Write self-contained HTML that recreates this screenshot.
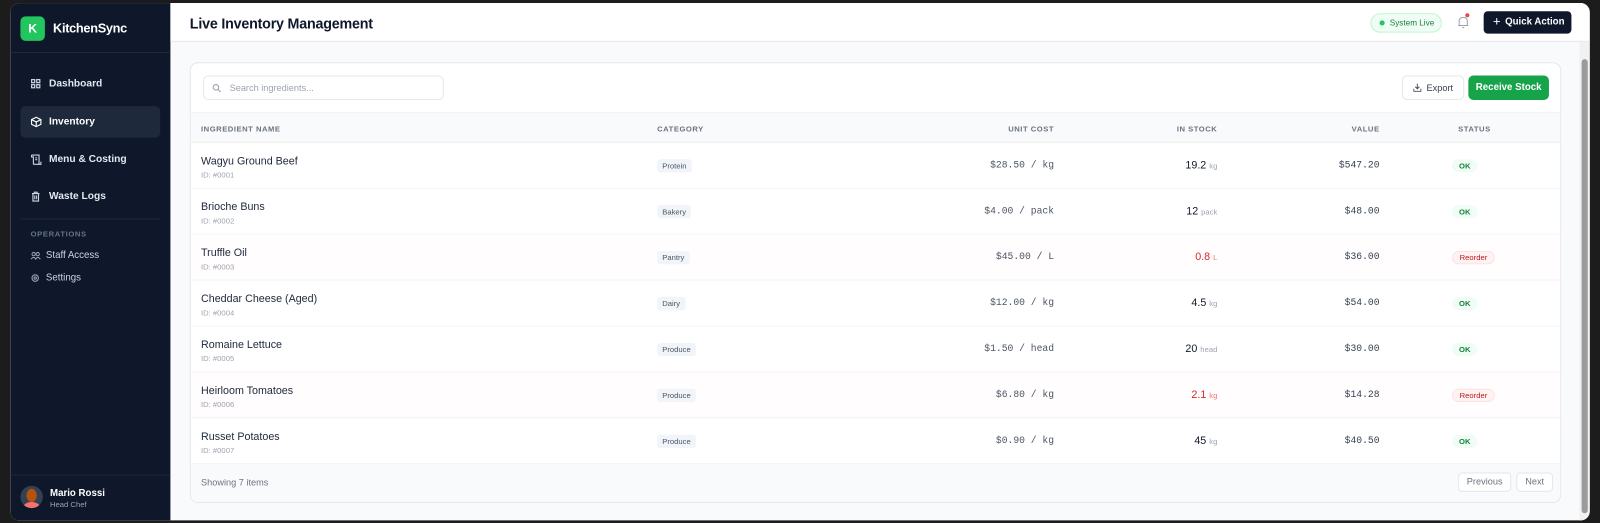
<!DOCTYPE html>
<html><head><meta charset="utf-8"><style>
*{box-sizing:border-box;margin:0;padding:0}
body{width:1600px;height:523px;background:#1c1c1c;font-family:"Liberation Sans",sans-serif;position:relative;overflow:hidden}
.wrap{position:absolute;left:0;top:0;width:1568px;height:513px;transform:scale(1.0204);transform-origin:0 0}
.win{position:absolute;left:10px;top:3px;width:1548px;height:507px;border-radius:9px;overflow:hidden;background:#f8fafc}
.side{position:absolute;left:0;top:0;width:157px;height:507px;background:#0f172a;color:#cbd5e1}
.logo{position:absolute;left:10px;top:13px;width:24px;height:24px;background:#22c55e;border-radius:5px;color:#fff;font-weight:bold;font-size:12px;text-align:center;line-height:24px}
.brand{position:absolute;left:42px;top:18px;color:#fff;font-weight:bold;font-size:12.5px;letter-spacing:-.3px}
.hr{position:absolute;left:0;width:157px;height:1px;background:#1e293b}
.nav{position:absolute;left:10px;width:137px;height:31px;border-radius:5px;font-size:10px;font-weight:bold;color:#e2e8f0;line-height:31px;padding-left:28px}
.nav svg{position:absolute;left:10px;top:10px}
.nav.act{background:#1e293b;color:#fff}
.sm{position:absolute;left:20px;font-size:9.5px;color:#cbd5e1}
.sm svg{position:absolute;left:0;top:1px}
.main{position:absolute;left:157px;top:0;width:1391px;height:507px}
.top{position:absolute;left:0;top:0;width:1391px;height:38px;background:#fff;border-bottom:1px solid #e5e7eb}
.title{position:absolute;left:19px;top:12px;font-size:14px;font-weight:bold;color:#0f172a;letter-spacing:-.2px}
.live{position:absolute;left:1176px;top:10px;width:70px;height:19px;border:1px solid #bbf7d0;background:#f0fdf4;border-radius:10px;font-size:8px;color:#15803d;line-height:17px;padding-left:18px}
.live:before{content:"";position:absolute;left:8px;top:6px;width:5px;height:5px;border-radius:50%;background:#22c55e}
.qa{position:absolute;left:1287px;top:8px;width:86px;height:22px;background:#0f172a;border-radius:4px;color:#fff;font-size:9.5px;font-weight:bold;line-height:22px;padding-left:21px;white-space:nowrap}
.qa:before{content:"+";position:absolute;left:9px;top:-1px;font-size:13px;font-weight:normal}
.scroll{position:absolute;left:1381px;top:38px;width:10px;height:469px;background:#f1f1f1}
.thumb{position:absolute;left:2px;top:17px;width:6px;height:445px;background:#9b9b9b;border-radius:3px}
.card{position:absolute;left:19px;top:58px;width:1344px;height:432px;background:#fff;border:1px solid #e5e7eb;border-radius:8px;overflow:hidden}
.search{position:absolute;left:12px;top:12px;width:236px;height:24px;border:1px solid #e5e7eb;border-radius:5px;font-size:9px;color:#9ca3af;line-height:22px;padding-left:25px}
.exp{position:absolute;left:1187px;top:12px;width:61px;height:24px;border:1px solid #e5e7eb;border-radius:5px;font-size:9px;color:#374151;line-height:22px;padding-left:23px}
.rs{position:absolute;left:1252px;top:12px;width:79px;height:24px;background:#16a34a;border-radius:5px;font-size:9.5px;color:#fff;font-weight:bold;line-height:24px;text-align:center}
.th{position:absolute;left:0;top:48px;width:1344px;height:30px;background:#f8fafc;border-top:1px solid #eef0f3;border-bottom:1px solid #eef0f3}
.h{position:absolute;top:11px;font-size:7.5px;font-weight:bold;color:#6b7280;letter-spacing:.5px}
.row{position:absolute;left:0;width:1344px;height:45px;border-bottom:1px solid #f1f3f5}
.nm{position:absolute;left:10px;top:12px;font-size:10.5px;color:#1e293b}
.id{position:absolute;left:10px;top:27px;font-size:7.5px;color:#9ca3af}
.cat{position:absolute;left:457px;top:16px;height:13px;padding:0 5px;background:#f1f5f9;border-radius:3px;font-size:7.5px;color:#4b5563;line-height:13px}
.mono{position:absolute;font-family:"Liberation Mono",monospace;font-size:9.5px;color:#4b5563;top:16px;text-align:right}
.uc{right:498px}.val{right:179px;color:#374151}
.st{position:absolute;right:338px;top:16px;font-size:10.5px;color:#0f172a}
.st small{font-size:7.5px;color:#9ca3af}
.st.red{color:#dc2626}.st.red small{color:#f87171}
.ok,.re{position:absolute;top:16px;height:13px;border-radius:7px;font-size:7.5px;line-height:13px;text-align:center}
.ok{left:1236px;width:25px;background:#f0fdf4;color:#15803d;font-weight:bold}
.re{left:1236px;width:42px;background:#fef2f2;color:#b91c1c;border:1px solid #fee2e2;line-height:11px}
.foot{position:absolute;left:0;top:393px;width:1344px;height:39px;background:#f8fafc}
.pg{position:absolute;top:8px;height:19px;border:1px solid #e5e7eb;background:#fff;border-radius:4px;font-size:9px;color:#6b7280;line-height:17px;text-align:center}
</style></head><body>
<div class="wrap">
<div class="win">
<div class="side">
<div class="logo">K</div><div class="brand">KitchenSync</div>
<div class="hr" style="top:48px"></div>
<div class="nav" style="top:64px"><svg width="10" height="10" viewBox="0 0 10 10" fill="none" stroke="#cbd5e1" stroke-width="1.2"><rect x="1" y="1" width="3" height="3"/><rect x="6" y="1" width="3" height="3"/><rect x="1" y="6" width="3" height="3"/><rect x="6" y="6" width="3" height="3"/></svg>Dashboard</div>
<div class="nav act" style="top:101px"><svg width="11" height="11" viewBox="0 0 12 12" fill="none" stroke="#fff" stroke-width="1.2"><path d="M6 1L11 3.5V8.5L6 11L1 8.5V3.5Z M1 3.5L6 6L11 3.5 M6 6V11"/></svg>Inventory</div>
<div class="nav" style="top:138px"><svg width="11" height="11" viewBox="0 0 12 12" fill="none" stroke="#cbd5e1" stroke-width="1.2"><path d="M1 1H9V11H3M1 1V3H3V11M5 4H7M5 6H7M3 11H11V8"/></svg>Menu &amp; Costing</div>
<div class="nav" style="top:174px"><svg width="10" height="11" viewBox="0 0 10 12" fill="none" stroke="#cbd5e1" stroke-width="1.2"><path d="M1 3H9M3.5 3V1.5H6.5V3M2 3V11H8V3M4 5V9M6 5V9"/></svg>Waste Logs</div>
<div class="hr" style="top:211px;left:10px;width:137px"></div>
<div class="sm" style="top:222px;left:20px;font-size:7.5px;font-weight:bold;color:#64748b;letter-spacing:.6px">OPERATIONS</div>
<div class="sm" style="top:242px;padding-left:15px"><svg width="10" height="9" viewBox="0 0 10 9" fill="none" stroke="#94a3b8" stroke-width="1"><circle cx="3" cy="3" r="1.6"/><circle cx="7" cy="3" r="1.6"/><path d="M0.5 8Q3 4.5 5 8Q7 4.5 9.5 8"/></svg>Staff Access</div>
<div class="sm" style="top:264px;padding-left:15px"><svg width="9" height="9" viewBox="0 0 10 10" fill="none" stroke="#94a3b8" stroke-width="1.2"><circle cx="5" cy="5" r="3.5"/><circle cx="5" cy="5" r="1.3"/></svg>Settings</div>
<div class="hr" style="top:462px"></div>
<div style="position:absolute;left:10px;top:473px;width:22px;height:22px;border-radius:50%;background:#334155;overflow:hidden"><div style="position:absolute;left:6px;top:3px;width:10px;height:13px;border-radius:50%;background:#b45309"></div><div style="position:absolute;left:3px;top:16px;width:16px;height:10px;border-radius:50%;background:#f87171"></div></div>
<div style="position:absolute;left:39px;top:475px;font-size:9.5px;font-weight:bold;color:#fff">Mario Rossi</div>
<div style="position:absolute;left:39px;top:487px;font-size:7.5px;color:#94a3b8">Head Chef</div>
</div>
<div class="main">
<div class="top"><div class="title">Live Inventory Management</div><div class="live">System Live</div>
<svg style="position:absolute;left:1261px;top:12px" width="12" height="14" viewBox="0 0 12 14" fill="none" stroke="#9ca3af" stroke-width="1"><path d="M2 10V6Q2 2 6 2Q10 2 10 6V10H11H1M5 12H7"/></svg>
<div style="position:absolute;left:1269px;top:10px;width:4px;height:4px;border-radius:50%;background:#ef4444"></div>
<div class="qa">Quick Action</div></div>
<div class="card">
<div class="search"><svg style="position:absolute;left:8px;top:7px" width="9" height="9" viewBox="0 0 10 10" fill="none" stroke="#9ca3af" stroke-width="1.2"><circle cx="4" cy="4" r="3"/><path d="M6.3 6.3L9 9"/></svg>Search ingredients...</div>
<div class="exp"><svg style="position:absolute;left:10px;top:7px" width="8" height="8" viewBox="0 0 8 8" fill="none" stroke="#4b5563" stroke-width="1"><path d="M4 0V5M2 3L4 5L6 3M0.5 5V7.5H7.5V5"/></svg>Export</div>
<div class="rs">Receive Stock</div>
<div class="th"><span class="h" style="left:10px">INGREDIENT NAME</span><span class="h" style="left:457px">CATEGORY</span><span class="h" style="right:498px">UNIT COST</span><span class="h" style="right:338px">IN STOCK</span><span class="h" style="right:179px">VALUE</span><span class="h" style="left:1242px">STATUS</span></div>
<div class="row" style="top:78px"><div class="nm">Wagyu Ground Beef</div><div class="id">ID: #0001</div><div class="cat">Protein</div><div class="mono uc">$28.50 / kg</div><div class="st">19.2 <small>kg</small></div><div class="mono val">$547.20</div><div class="ok">OK</div></div>
<div class="row" style="top:123px"><div class="nm">Brioche Buns</div><div class="id">ID: #0002</div><div class="cat">Bakery</div><div class="mono uc">$4.00 / pack</div><div class="st">12 <small>pack</small></div><div class="mono val">$48.00</div><div class="ok">OK</div></div>
<div class="row" style="top:168px;background:#fffdfd"><div class="nm">Truffle Oil</div><div class="id">ID: #0003</div><div class="cat">Pantry</div><div class="mono uc">$45.00 / L</div><div class="st red">0.8 <small>L</small></div><div class="mono val">$36.00</div><div class="re">Reorder</div></div>
<div class="row" style="top:213px"><div class="nm">Cheddar Cheese (Aged)</div><div class="id">ID: #0004</div><div class="cat">Dairy</div><div class="mono uc">$12.00 / kg</div><div class="st">4.5 <small>kg</small></div><div class="mono val">$54.00</div><div class="ok">OK</div></div>
<div class="row" style="top:258px"><div class="nm">Romaine Lettuce</div><div class="id">ID: #0005</div><div class="cat">Produce</div><div class="mono uc">$1.50 / head</div><div class="st">20 <small>head</small></div><div class="mono val">$30.00</div><div class="ok">OK</div></div>
<div class="row" style="top:303px;background:#fffdfd"><div class="nm">Heirloom Tomatoes</div><div class="id">ID: #0006</div><div class="cat">Produce</div><div class="mono uc">$6.80 / kg</div><div class="st red">2.1 <small>kg</small></div><div class="mono val">$14.28</div><div class="re">Reorder</div></div>
<div class="row" style="top:348px"><div class="nm">Russet Potatoes</div><div class="id">ID: #0007</div><div class="cat">Produce</div><div class="mono uc">$0.90 / kg</div><div class="st">45 <small>kg</small></div><div class="mono val">$40.50</div><div class="ok">OK</div></div>
<div class="foot"><div style="position:absolute;left:10px;top:13px;font-size:9px;color:#6b7280">Showing 7 items</div><div class="pg" style="left:1242px;width:52px">Previous</div><div class="pg" style="left:1299px;width:36px">Next</div></div>
</div>
<div class="scroll"><div class="thumb"></div></div>
</div>
</div>
</div>
</body></html>
